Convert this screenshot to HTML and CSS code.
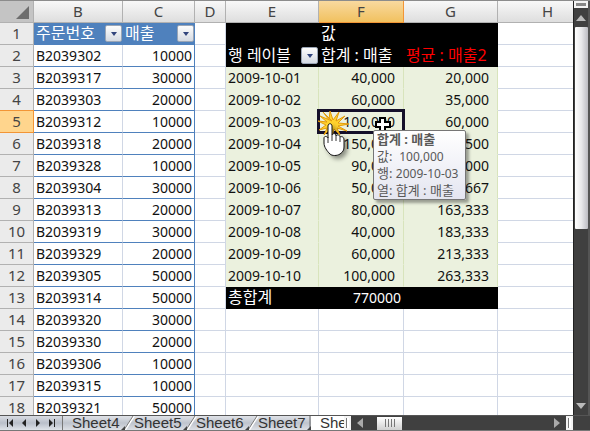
FILE: index.html
```html
<!DOCTYPE html>
<html lang="ko">
<head>
    <meta charset="UTF-8">
    <meta name="viewport" content="width=device-width, initial-scale=1.0">
    <title>매출 피벗 테이블</title>
    <link rel="stylesheet" href="styles.css">
</head>
<body>
    <div class="main">
        <div class="sheet">
            <table>
                <colgroup>
                    <col class="col-num"><col class="col-b"><col class="col-c"><col class="col-d">
                    <col class="col-e"><col class="col-f"><col class="col-g"><col>
                </colgroup>
                <thead>
                    <tr>
                        <th class="corner"><svg width="33" height="21"><path d="M29 5v13H16z" fill="#6e6e6e"/></svg></th>
                        <th>B</th><th>C</th><th>D</th><th>E</th><th class="active">F</th><th>G</th><th class="last">H</th>
                    </tr>
                </thead>
                <tbody>
                    <tr class="titles">
                        <th>1</th>
                        <td class="list-head"><div class="head">주문번호<button class="filter" aria-label="주문번호 필터"></button></div></td>
                        <td class="list-head"><div class="head">매출<button class="filter" aria-label="매출 필터"></button></div></td>
                        <td></td><td class="black"></td><td class="black">값</td><td class="black"></td><td></td>
                    </tr>
                    <tr class="titles">
                        <th>2</th><td class="id">B2039302</td><td class="amount">10000</td><td></td>
                        <td class="black"><div class="head">행 레이블<button class="filter" aria-label="행 레이블 필터"></button></div></td>
                        <td class="black">합계 : 매출</td><td class="black red">평균 : 매출2</td><td></td>
                    </tr>
                    <tr><th>3</th><td class="id">B2039317</td><td class="amount">30000</td><td></td><td class="date">2009-10-01</td><td class="value">40,000</td><td class="value">20,000</td><td></td></tr>
                    <tr><th>4</th><td class="id">B2039303</td><td class="amount">20000</td><td></td><td class="date">2009-10-02</td><td class="value">60,000</td><td class="value">35,000</td><td></td></tr>
                    <tr>
                        <th class="active">5</th><td class="id">B2039312</td><td class="amount">10000</td><td></td><td class="date">2009-10-03</td>
                        <td class="value selected">100,000
                            <svg class="burst" width="32" height="26" viewBox="0 0 32 26">
                                <path d="M14 10L5 1l6 8L12 0l3 9 6-8-3 9 9-5-7 7 11 1-11 2 9 5-10-3 3 7-6-6-2 7-2-7-6 6 3-7-8 2 7-5-8-4 9 1-7-6z" fill="#ffd22e" stroke="#e39b0b"/>
                            </svg>
                            <svg class="hand" width="26" height="34" viewBox="0 0 26 34">
                                <path d="M6 3c0-3 4-3 4 0v9c1-2 4-2 4 1 1-2 4-1 4 1 2-1 4 0 4 3v7c0 3-1 5-4 7-3 2-8 2-10 0-3-3-6-7-6-11v-5c0-2 3-2 4 0z" fill="#fff" stroke="#111"/>
                                <path d="M10 12v6M14 13v5M18 14v5M6 14v6" fill="none" stroke="#333"/>
                            </svg>
                            <svg class="cross" width="16" height="16" viewBox="0 0 16 16">
                                <path d="M5 1h5v4h5v5h-5v5H5v-5H1V5h4z" fill="#fff" stroke="#000" stroke-width="2"/>
                            </svg>
                            <div class="tooltip" role="tooltip">
                                <strong>합계 : 매출</strong>
                                <div>값:&nbsp; <span class="figure">100,000</span></div>
                                <div>행: <span class="figure">2009-10-03</span></div>
                                <div>열: 합계 : 매출</div>
                            </div>
                        </td>
                        <td class="value">60,000</td><td></td>
                    </tr>
                    <tr><th>6</th><td class="id">B2039318</td><td class="amount">20000</td><td></td><td class="date">2009-10-04</td><td class="value">150,000</td><td class="value">82,500</td><td></td></tr>
                    <tr><th>7</th><td class="id">B2039328</td><td class="amount">10000</td><td></td><td class="date">2009-10-05</td><td class="value">90,000</td><td class="value">90,000</td><td></td></tr>
                    <tr><th>8</th><td class="id">B2039304</td><td class="amount">30000</td><td></td><td class="date">2009-10-06</td><td class="value">50,000</td><td class="value">126,667</td><td></td></tr>
                    <tr><th>9</th><td class="id">B2039313</td><td class="amount">20000</td><td></td><td class="date">2009-10-07</td><td class="value">80,000</td><td class="value">163,333</td><td></td></tr>
                    <tr><th>10</th><td class="id">B2039319</td><td class="amount">30000</td><td></td><td class="date">2009-10-08</td><td class="value">40,000</td><td class="value">183,333</td><td></td></tr>
                    <tr><th>11</th><td class="id">B2039329</td><td class="amount">20000</td><td></td><td class="date">2009-10-09</td><td class="value">60,000</td><td class="value">213,333</td><td></td></tr>
                    <tr><th>12</th><td class="id">B2039305</td><td class="amount">50000</td><td></td><td class="date">2009-10-10</td><td class="value">100,000</td><td class="value">263,333</td><td></td></tr>
                    <tr><th>13</th><td class="id">B2039314</td><td class="amount">50000</td><td></td><td class="black total">총합계</td><td class="black amount">770000</td><td class="black"></td><td></td></tr>
                    <tr><th>14</th><td class="id">B2039320</td><td class="amount">30000</td><td></td><td></td><td></td><td></td><td></td></tr>
                    <tr><th>15</th><td class="id">B2039330</td><td class="amount">20000</td><td></td><td></td><td></td><td></td><td></td></tr>
                    <tr><th>16</th><td class="id">B2039306</td><td class="amount">10000</td><td></td><td></td><td></td><td></td><td></td></tr>
                    <tr><th>17</th><td class="id">B2039315</td><td class="amount">10000</td><td></td><td></td><td></td><td></td><td></td></tr>
                    <tr><th>18</th><td class="id">B2039321</td><td class="amount">50000</td><td></td><td></td><td></td><td></td><td></td></tr>
                </tbody>
            </table>
        </div>
        <div class="vscroll">
            <button class="split" aria-label="창 나누기"></button>
            <button class="arrow" aria-label="위로"><svg width="10" height="6"><path d="M5 0l5 6H0z" fill="#bbb"/></svg></button>
            <div class="vthumb"></div>
            <button class="arrow down" aria-label="아래로"><svg width="10" height="6"><path d="M0 0h10L5 6z" fill="#bbb"/></svg></button>
        </div>
    </div>

    <div class="bottom">
        <div class="nav">
            <button aria-label="첫 시트"><svg width="8" height="8"><path d="M1 0h1v8H1zM7 0v8L3 4z"/></svg></button>
            <button aria-label="이전 시트"><svg width="8" height="8"><path d="M6 0v8L2 4z"/></svg></button>
            <button aria-label="다음 시트"><svg width="8" height="8"><path d="M2 0v8l4-4z"/></svg></button>
            <button aria-label="마지막 시트"><svg width="8" height="8"><path d="M6 0h1v8H6zM1 0v8l4-4z"/></svg></button>
        </div>
        <div class="tabs">
            <button class="tab">Sheet4<svg width="14" height="14"><path d="M4 14L13 0" stroke="#fff" stroke-width="2"/><path d="M3 14L12 0" stroke="#777"/><path d="M0 14l4-4v4z" fill="#444"/></svg></button>
            <button class="tab">Sheet5<svg width="14" height="14"><path d="M4 14L13 0" stroke="#fff" stroke-width="2"/><path d="M3 14L12 0" stroke="#777"/><path d="M0 14l4-4v4z" fill="#444"/></svg></button>
            <button class="tab">Sheet6<svg width="14" height="14"><path d="M4 14L13 0" stroke="#fff" stroke-width="2"/><path d="M3 14L12 0" stroke="#777"/><path d="M0 14l4-4v4z" fill="#444"/></svg></button>
            <button class="tab">Sheet7<svg width="14" height="14"><path d="M3 14V0" stroke="#666"/><path d="M0 14l4-4v4z" fill="#444"/></svg></button>
            <button class="tab current">She</button>
        </div>
        <div class="hscroll">
            <button class="grip" aria-label="탭 너비 조절"></button>
            <button class="arrow" aria-label="왼쪽으로"><svg width="6" height="10"><path d="M6 0v10L0 5z" fill="#aaa"/></svg></button>
            <div class="hthumb"><svg width="10" height="8"><path d="M0 0h1v8H0zM3 0h1v8H3zM6 0h1v8H6zM9 0h1v8H9z" fill="#777"/></svg></div>
            <button class="arrow right" aria-label="오른쪽으로"><svg width="6" height="10"><path d="M0 0v10l6-5z" fill="#aaa"/></svg></button>
            <button class="grip" aria-label="창 나누기"></button>
        </div>
        <div class="end"></div>
    </div>
</body>
</html>
```
FILE: styles.css
```css
* {
    box-sizing: border-box;
}

body {
    margin: 0;
    height: 100vh;
    display: flex;
    flex-direction: column;
    overflow: hidden;
    font-family: "Noto Sans", "Noto Sans CJK KR", sans-serif;
    font-size: 14px;
    color: #111;
    background: #fff;
}

button {
    margin: 0;
    padding: 0;
    border: none;
    background: none;
    font: inherit;
    color: inherit;
}

svg {
    display: block;
}

.main {
    flex: 1;
    min-height: 0;
    display: flex;
    border-top: 1px solid #8c8c8c;
}

.sheet {
    flex: 1;
    min-width: 0;
    overflow: hidden;
}

/* grid */
table {
    width: 100%;
    table-layout: fixed;
    border-collapse: separate;
    border-spacing: 0;
}

.col-num { width: 34px; }
.col-b { width: 89px; }
.col-c { width: 72px; }
.col-d { width: 31px; }
.col-e { width: 93px; }
.col-f { width: 85px; }
.col-g { width: 94px; }

th,
td {
    height: 22px;
    padding: 0 2px;
    line-height: 21px;
    white-space: nowrap;
    border-right: 1px solid #d0d7e5;
    border-bottom: 1px solid #d0d7e5;
}

th {
    padding: 0;
    font-weight: normal;
    font-size: 15px;
    color: #444;
    background: #ebebeb;
    border-color: #b1b1b1;
}

thead th {
    background: linear-gradient(#f8f8f8, #dedede);
}

thead .corner {
    background: #c4c4c4;
}

thead .last {
    padding-left: 24px;
}

thead .active {
    background: linear-gradient(#f9d99f, #f1c15f);
    border-color: #f29536;
}

tbody .active {
    background: #ffd58d;
    border-color: #f29536;
    box-shadow: 0 -1px #f29536;
}

tr > :last-child {
    border-right: none;
}

.titles td {
    font-size: 16px;
}

.titles .id,
.titles .amount {
    font-size: 14px;
}

.list-head {
    background: #4f81bd;
    border-color: #4f81bd;
    color: #fff;
}

.head {
    display: flex;
    align-items: center;
    justify-content: space-between;
    height: 21px;
    margin-right: -2px;
}

.filter {
    width: 17px;
    height: 17px;
    display: flex;
    align-items: center;
    justify-content: center;
    border: 1px solid #9aa5b5;
    border-radius: 2px;
    background: linear-gradient(#fdfdfd, #d5dae2);
}

.filter::after {
    content: "";
    border: 3px solid transparent;
    border-top: 4px solid #31447c;
    border-bottom: none;
}

.id,
.amount {
    border-bottom-color: #4f81bd;
}

.amount {
    text-align: right;
    border-right-color: #4f81bd;
}

.date,
.value {
    background: #ebf1de;
    border-right-color: #d8e4bc;
    border-bottom-color: #ebf1de;
}

.value {
    padding-right: 8px;
    text-align: right;
}

.black {
    background: #000;
    border-color: #000;
    color: #fff;
}

.red {
    color: #f00;
}

.total {
    font-size: 16px;
}

/* selected cell and what floats over it */
.selected {
    position: relative;
}

.selected::before {
    content: "";
    position: absolute;
    inset: -2px;
    border: 3px solid #15102a;
}

.burst,
.hand,
.cross,
.tooltip {
    position: absolute;
    z-index: 2;
}

.burst {
    left: -1px;
    top: 0;
}

.hand {
    left: 3px;
    top: 12px;
    z-index: 3;
    filter: drop-shadow(3px 3px 2px rgba(0, 0, 0, 0.4));
}

.cross {
    left: 56px;
    top: 6px;
}

.tooltip {
    left: 54px;
    top: 19px;
    width: 93px;
    padding: 0 3px;
    text-align: left;
    font-size: 13px;
    line-height: 17px;
    color: #595959;
    background: linear-gradient(#fff, #e4e5f0);
    border: 1px solid #767676;
    border-radius: 2px;
    box-shadow: 3px 3px 3px rgba(0, 0, 0, 0.35);
}

.tooltip strong {
    display: block;
}

.figure {
    font-size: 12px;
}

/* scroll bars */
.vscroll {
    width: 17px;
    display: flex;
    flex-direction: column;
    align-items: center;
    background: #404040;
    border-left: 1px solid #222;
    border-right: 2px solid #555;
}

.split {
    width: 14px;
    height: 7px;
    border: 2px solid #f4f4f4;
    background: #888;
}

.arrow {
    display: flex;
    align-items: center;
    justify-content: center;
    width: 14px;
    height: 19px;
}

.vthumb {
    width: 13px;
    height: 202px;
    border-radius: 1px;
    background: linear-gradient(90deg, #fff, #e8e8ea 50%, #bcbcc2);
}

.down {
    margin-top: auto;
}

.bottom {
    height: 16px;
    display: flex;
    background: #404040;
    border-top: 1px solid #555;
    border-bottom: 1px solid #777;
}

.nav {
    width: 63px;
    padding: 0 3px;
    display: flex;
    align-items: center;
    justify-content: space-around;
    background: linear-gradient(#d9dce2, #b9bfca 50%, #dfe3e9);
    border-right: 1px solid #777;
}

.nav svg {
    fill: #222;
}

.tabs {
    flex: 345;
    min-width: 0;
    max-width: 281px;
    display: flex;
    overflow: hidden;
    background: #fff;
}

.tab {
    flex: none;
    width: 62px;
    height: 14px;
    padding-left: 9px;
    display: flex;
    justify-content: space-between;
    font-family: "Liberation Sans", Arial, sans-serif;
    font-size: 15px;
    line-height: 14px;
    color: #333;
    background: linear-gradient(#e0e3e8, #bfc4cd 50%, #dde0e6);
}

.tab svg {
    flex: none;
    margin-right: -10px;
    z-index: 1;
    position: relative;
}

.current {
    background: #fff;
}

.hscroll {
    flex: 229;
    display: flex;
    align-items: center;
}

.grip {
    width: 7px;
    height: 14px;
    border: 2px solid #f4f4f4;
    background: #fff;
    box-shadow: inset 1px 0 #777;
}

.hthumb {
    width: 25px;
    height: 13px;
    margin-left: 8px;
    display: flex;
    align-items: center;
    justify-content: center;
    background: linear-gradient(#fff, #d0d0d0);
}

.hscroll .arrow {
    width: 18px;
    height: 14px;
}

.hscroll .right {
    margin-left: auto;
}

.end {
    width: 17px;
}
```
